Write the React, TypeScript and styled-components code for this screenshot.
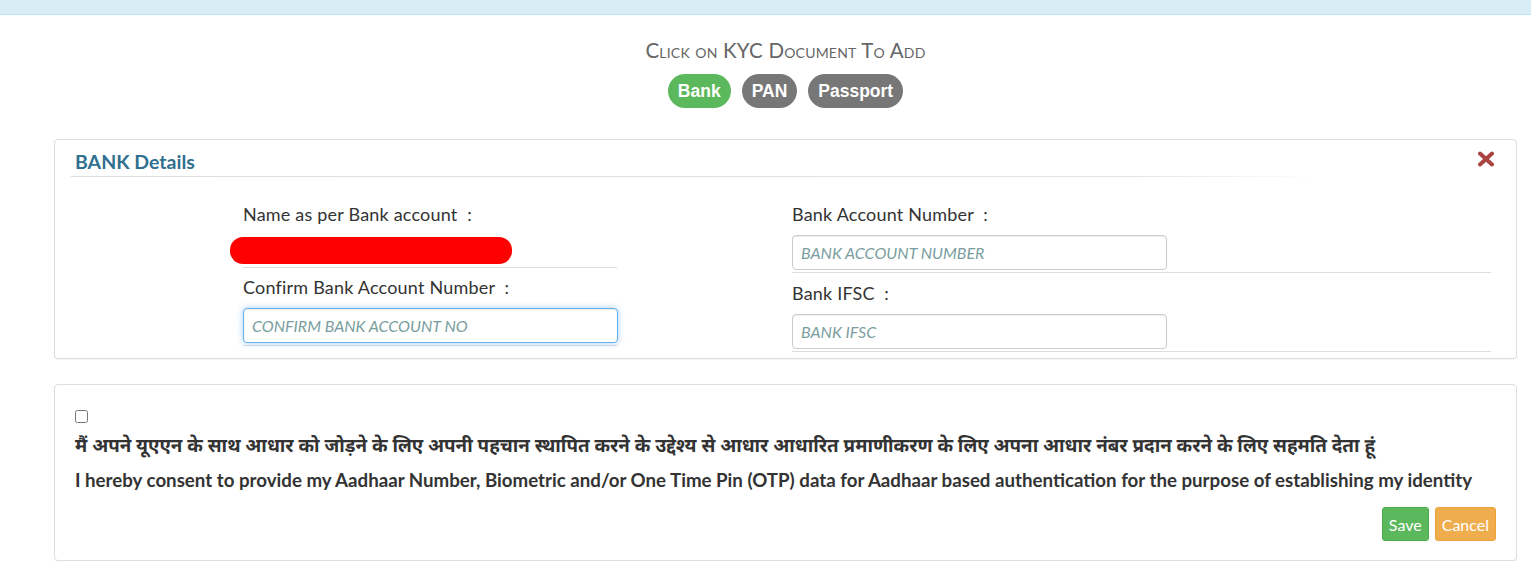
import React from 'react';
import styled, { createGlobalStyle } from 'styled-components';

const GlobalStyle = createGlobalStyle`
  html, body {
    margin: 0;
    padding: 0;
    background: #fff;
  }
  body {
    font-family: Lato, "Open Sans", sans-serif;
    color: #333;
  }
`;

const App: React.FC = () => {
  return (
    <>
      <GlobalStyle />
      <TopBar />
      <Page>
        <Heading>Click on KYC Document To Add</Heading>
        <BadgeRow>
          <Badge $tone="green">Bank</Badge>
          <Badge $tone="gray">PAN</Badge>
          <Badge $tone="gray">Passport</Badge>
        </BadgeRow>

        <Panel $top={31}>
          <PanelTitle>
            <span>BANK Details</span>
            <CloseIcon viewBox="0 0 18 16" aria-label="close">
              <path d="M3 2.5 L15 13.5 M15 2.5 L3 13.5" stroke="#a94442" strokeWidth="4" strokeLinecap="round" />
            </CloseIcon>
          </PanelTitle>
          <FormGrid>
            <Column>
              <Field>
                <Label>Name as per Bank account&nbsp;&nbsp;:</Label>
                <Redacted />
              </Field>
              <Field $gap={7}>
                <Label>Confirm Bank Account Number&nbsp;&nbsp;:</Label>
                <Input $focused placeholder="CONFIRM BANK ACCOUNT NO" />
              </Field>
            </Column>
            <Column>
              <Field>
                <Label>Bank Account Number&nbsp;&nbsp;:</Label>
                <Input placeholder="BANK ACCOUNT NUMBER" />
              </Field>
              <Field $gap={8}>
                <Label>Bank IFSC&nbsp;&nbsp;:</Label>
                <Input placeholder="BANK IFSC" />
              </Field>
            </Column>
          </FormGrid>
        </Panel>

        <Panel $top={25}>
          <ConsentBody>
            <CheckBox type="checkbox" />
            <HindiText>
              मैं अपने यूएएन के साथ आधार को जोड़ने के लिए अपनी पहचान स्थापित करने के उद्देश्य से आधार आधारित प्रमाणीकरण के लिए अपना आधार नंबर प्रदान करने के लिए सहमति देता हूं
            </HindiText>
            <EnglishText>
              I hereby consent to provide my Aadhaar Number, Biometric and/or One Time Pin (OTP) data for Aadhaar based authentication for the purpose of establishing my identity
            </EnglishText>
            <Actions>
              <Button $tone="green">Save</Button>
              <Button $tone="orange">Cancel</Button>
            </Actions>
          </ConsentBody>
        </Panel>
      </Page>
    </>
  );
};

const TopBar = styled.div`
  height: 14px;
  background: #d9edf7;
  border-bottom: 1px solid #bce8f1;
`;

const Page = styled.div`
  margin: 0 14px 0 54px;
  padding-top: 23px;
`;

const Heading = styled.div`
  text-align: center;
  font-family: Lato, sans-serif;
  font-variant: small-caps;
  font-size: 20.5px;
  line-height: 24px;
  color: #666;
  letter-spacing: 0.2px;
`;

const BadgeRow = styled.div`
  display: flex;
  justify-content: center;
  gap: 11px;
  margin-top: 12px;
`;

const Badge = styled.span<{ $tone: 'green' | 'gray' }>`
  display: inline-flex;
  align-items: center;
  height: 34px;
  padding: 0 10px;
  border-radius: 17px;
  background: ${({ $tone }) => ($tone === 'green' ? '#5cb85c' : '#777')};
  color: #fff;
  font-family: "Liberation Sans", Arial, sans-serif;
  font-weight: bold;
  font-size: 17.5px;
`;

const Panel = styled.div<{ $top: number }>`
  margin-top: ${({ $top }) => $top}px;
  border: 1px solid #ddd;
  border-radius: 4px;
  background: #fff;
  box-shadow: 0 1px 1px rgba(0, 0, 0, 0.05);
`;

const PanelTitle = styled.div`
  position: relative;
  margin: 0 196px 0 16px;
  padding: 10px 0 2px 4px;
  line-height: 24px;
  font-size: 19.5px;
  font-weight: bold;
  color: #31708f;
  border-bottom: 1px solid transparent;
  border-image: linear-gradient(to right, #ddd 0%, #e4e4e4 85%, rgba(255, 255, 255, 0) 100%) 1;
`;

const CloseIcon = styled.svg`
  position: absolute;
  right: -175px;
  top: 11px;
  width: 18px;
  height: 16px;
`;

const FormGrid = styled.div`
  display: grid;
  grid-template-columns: 374px 699px;
  column-gap: 175px;
  margin: 25px 0 6px 188px;
`;

const Column = styled.div`
  display: flex;
  flex-direction: column;
`;

const Field = styled.div<{ $gap?: number }>`
  display: flex;
  flex-direction: column;
  align-items: flex-start;
  padding-top: ${({ $gap }) => $gap ?? 0}px;
  padding-bottom: 2px;
  border-bottom: 1px solid #ddd;
`;

const Label = styled.label`
  font-size: 18px;
  letter-spacing: 0.2px;
  line-height: 24px;
  color: #333;
  margin-bottom: 9px;
`;

const Redacted = styled.div`
  width: 282px;
  height: 27px;
  margin: 2px 0 1px -13px;
  border-radius: 13px;
  background: #ff0000;
`;

const Input = styled.input<{ $focused?: boolean }>`
  box-sizing: border-box;
  width: 375px;
  height: 35px;
  padding: 0 8px;
  border-radius: 4px;
  border: 1px solid ${({ $focused }) => ($focused ? '#66afe9' : '#ccc')};
  box-shadow: ${({ $focused }) =>
    $focused
      ? 'inset 0 1px 1px rgba(0,0,0,.075), 0 0 6px rgba(102,175,233,.6)'
      : 'inset 0 1px 1px rgba(0,0,0,.075)'};
  font-family: Lato, sans-serif;
  font-size: 16px;
  outline: none;
  &::placeholder {
    color: #7a9e9f;
    font-style: italic;
  }
`;

const ConsentBody = styled.div`
  padding: 25px 19px 19px 20px;
  display: flex;
  flex-direction: column;
  align-items: flex-start;
`;

const CheckBox = styled.input`
  width: 13px;
  height: 13px;
  margin: 0;
`;

const HindiText = styled.div`
  margin-top: 11px;
  font-family: "Noto Sans Devanagari", "Noto Sans", Lato, sans-serif;
  font-weight: bold;
  font-size: 18.8px;
  line-height: 28px;
  color: #333;
`;

const EnglishText = styled.div`
  margin-top: 6px;
  font-size: 18.7px;
  font-weight: bold;
  line-height: 24px;
  color: #333;
`;

const Actions = styled.div`
  align-self: flex-end;
  display: flex;
  gap: 6px;
  margin-top: 15px;
  margin-right: 1px;
`;

const Button = styled.button<{ $tone: 'green' | 'orange' }>`
  height: 34px;
  padding: 0 6px;
  border-radius: 3px;
  border: 1px solid ${({ $tone }) => ($tone === 'green' ? '#4cae4c' : '#eea236')};
  background: ${({ $tone }) => ($tone === 'green' ? '#5cb85c' : '#f0ad4e')};
  color: #fff;
  font-family: Lato, sans-serif;
  font-size: 16px;
`;

export default App;
